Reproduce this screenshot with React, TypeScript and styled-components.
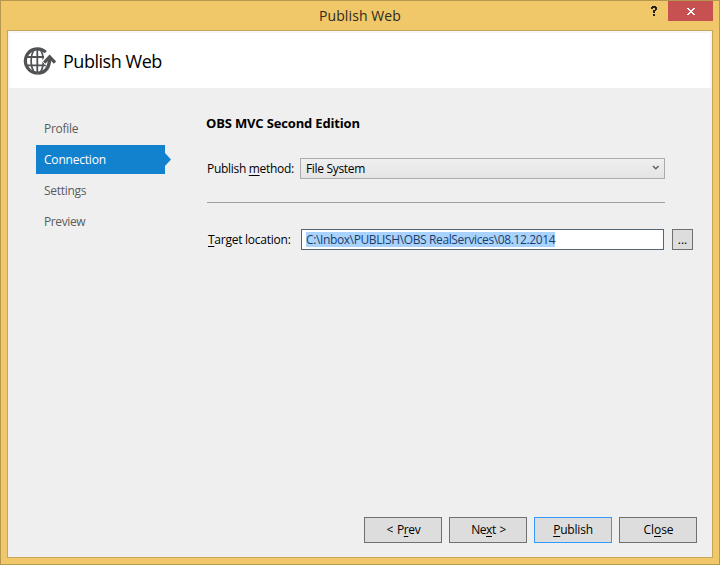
import React from "react";
import styled, { createGlobalStyle } from "styled-components";

const GlobalStyle = createGlobalStyle`
  * { box-sizing: border-box; }
  body { margin: 0; background: #f0c869; overflow: hidden; }
  button, input { font: inherit; }
`;

const Window = styled.div`
  width: 720px;
  height: 565px;
  display: flex;
  flex-direction: column;
  border: 1px solid #b7964e;
  background: #f0c869;
  color: #000;
  font: 12px/16px "Open Sans", "Noto Sans", sans-serif;
  white-space: nowrap;
`;

const TitleBar = styled.header`
  height: 29px;
  flex: none;
  display: grid;
  grid-template-columns: 1fr 86px 1fr;
  align-items: start;
`;

const Caption = styled.h1`
  grid-column: 2;
  margin: 5px 0 0 2px;
  font-size: 14px;
  line-height: 20px;
  font-weight: 400;
  letter-spacing: 0.1px;
  color: #2e2a20;
`;

const WindowControls = styled.div`
  display: flex;
  justify-content: flex-end;
  padding-right: 6px;
`;

const HelpButton = styled.button`
  width: 28px;
  height: 20px;
  padding: 0;
  border: 0;
  background: none;
  display: grid;
  place-items: center;
`;

const CloseBox = styled.button`
  width: 45px;
  height: 20px;
  padding: 0 0 0 1px;
  border: 0;
  background: #c75050;
  display: grid;
  place-items: center;
`;

const Dialog = styled.main`
  width: 706px;
  height: 528px;
  margin-left: 6px;
  display: flex;
  flex-direction: column;
  border: 1px solid #c8a657;
  background: #efefef;
`;

const Banner = styled.div`
  height: 55px;
  flex: none;
  margin: 2px 2px 0;
  padding-left: 13px;
  display: flex;
  align-items: center;
  background: #fff;
  box-shadow: 0 0 0 2px #f5f5f5;
  clip-path: inset(-2px -2px 0 -2px);
`;

const BannerTitle = styled.h2`
  margin: 1px 0 0 6px;
  font-size: 18px;
  line-height: 26px;
  font-weight: 400;
  letter-spacing: -0.47px;
`;

const Body = styled.div`
  flex: 1;
  display: grid;
  grid-template-columns: 135px 1fr;
  column-gap: 35px;
  padding: 26px 15px 0 28px;
`;

const Steps = styled.nav`
  display: flex;
  flex-direction: column;
  gap: 2px;
`;

const Step = styled.a<{ $active?: boolean; $tracking: number }>`
  height: 29px;
  padding-left: 8px;
  display: flex;
  align-items: center;
  color: ${(p) => (p.$active ? "#fff" : "#5c5c5c")};
  background: ${(p) => (p.$active ? "#1382ce" : "transparent")};
  letter-spacing: ${(p) => p.$tracking}px;
  clip-path: polygon(0 0, 129px 0, 129px 8px, 135px 14.5px, 129px 21px, 129px 100%, 0 100%);
`;

const Form = styled.section`
  display: flex;
  flex-direction: column;
`;

const ProjectName = styled.h3`
  margin: 0 0 26px;
  font-size: 13px;
  line-height: 18px;
  font-weight: 700;
  letter-spacing: -0.16px;
`;

const Field = styled.div`
  display: flex;
  align-items: center;
  height: 21px;
`;

const FieldLabel = styled.label<{ $width: number; $tracking: number; $inset: number }>`
  width: ${(p) => p.$width}px;
  padding-left: ${(p) => p.$inset}px;
  flex: none;
  letter-spacing: ${(p) => p.$tracking}px;
`;

const Key = styled.span`
  text-decoration: underline;
  text-decoration-thickness: 1px;
  text-underline-offset: 2px;
  text-decoration-skip-ink: none;
`;

const Select = styled.button`
  width: 365px;
  height: 21px;
  padding: 0 4px 0 5px;
  display: flex;
  align-items: center;
  justify-content: space-between;
  border: 1px solid #acacac;
  background: linear-gradient(#efefef, #e4e4e4);
  letter-spacing: -0.33px;
  color: #000;

  svg {
    margin-bottom: 2px;
  }
`;

const Divider = styled.hr`
  width: 458px;
  height: 1px;
  margin: 23px 0 26px 1px;
  border: 0;
  background: #a0a0a0;
`;

const PathBox = styled.div`
  width: 363px;
  height: 21px;
  padding: 2px 4px;
  border: 1px solid #566573;
  background: #fff;
`;

const Selected = styled.span`
  display: block;
  width: 249px;
  height: 15px;
  line-height: 15px;
  background: #a9d3fd;
  color: #1c3d68;
  letter-spacing: -0.38px;
`;

const Browse = styled.button`
  width: 21px;
  height: 21px;
  margin-left: 8px;
  padding: 0;
  border: 1px solid #707070;
  background: #ddd;
  color: #000;
  line-height: 19px;
`;

const Actions = styled.footer`
  display: flex;
  justify-content: flex-end;
  gap: 7px;
  padding: 0 15px 14px 0;
`;

const ActionButton = styled.button<{ $primary?: boolean; $tracking: number; $gap?: number }>`
  width: 78px;
  height: 26px;
  padding: 0 0 0 ${(p) => (p.$primary ? 0 : 1)}px;
  border: 1px solid ${(p) => (p.$primary ? "#3399ff" : "#707070")};
  background: #ddd;
  color: #000;
  letter-spacing: ${(p) => p.$tracking}px;
  word-spacing: ${(p) => p.$gap ?? 0}px;
`;

const GlobeIcon = () => (
  <svg width="34" height="30" viewBox="0 0 34 30" fill="none" stroke="#505254" aria-hidden="true">
    <path d="M22.8 6.2A12.1 12.1 0 1 0 14.3 27.1" strokeWidth="3.2" />
    <path d="M14.3 3v24M3 11h18M3 19.3h20" strokeWidth="1.8" />
    <path d="M11.6 3.3C7 9 7 21 11.6 26.5M17 3.3C21.4 9 21.4 21 17 26.5" strokeWidth="1.7" />
    <path d="M20.6 17L26.6 10.6" stroke="#fff" strokeWidth="6" />
    <path d="M14.3 27.1C22.5 27.1 26.6 21.5 26.6 11.5" strokeWidth="3.4" />
    <path d="M21.2 16.6L26.6 10.8L32 16.6" strokeWidth="3.2" />
  </svg>
);

const App = () => (
  <>
    <GlobalStyle />
    <Window>
      <TitleBar>
        <Caption>Publish Web</Caption>
        <WindowControls>
          <HelpButton aria-label="Help">
            <svg width="6" height="10" viewBox="0 0 6 10" fill="#24221e" shapeRendering="crispEdges">
              <path d="M1 0h4v1h1v3H5v1H4v2H2V4h2V2H2v1H0V1h1zM2 8h2v2H2z" />
            </svg>
          </HelpButton>
          <CloseBox aria-label="Close window">
            <svg width="8" height="7" viewBox="0 0 8 7" fill="#fff" shapeRendering="crispEdges">
              <path d="M0 0h2v1h1v1h2V1h1V0h2v1H7v1H6v1H5v1h1v1h1v1h1v1H6V6H5V5H3v1H2v1H0V6h1V5h1V4h1V3H2V2H1V1H0z" />
            </svg>
          </CloseBox>
        </WindowControls>
      </TitleBar>
      <Dialog>
        <Banner>
          <GlobeIcon />
          <BannerTitle>Publish Web</BannerTitle>
        </Banner>
        <Body>
          <Steps>
            <Step $tracking={-0.3}>Profile</Step>
            <Step $active $tracking={-0.2}>Connection</Step>
            <Step $tracking={-0.3}>Settings</Step>
            <Step $tracking={-0.4}>Preview</Step>
          </Steps>
          <Form>
            <ProjectName>OBS MVC Second Edition</ProjectName>
            <Field>
              <FieldLabel $width={94} $tracking={-0.3} $inset={1}>
                Publish <Key>m</Key>ethod:
              </FieldLabel>
              <Select>
                File System
                <svg width="8" height="6" viewBox="0 0 8 6" fill="none" stroke="#606060" strokeWidth="1.5">
                  <path d="M1 1l2.8 2.8L6.6 1" />
                </svg>
              </Select>
            </Field>
            <Divider />
            <Field>
              <FieldLabel $width={95} $tracking={-0.25} $inset={2}>
                <Key>T</Key>arget location:
              </FieldLabel>
              <PathBox>
                <Selected>C:\Inbox\PUBLISH\OBS RealServices\08.12.2014</Selected>
              </PathBox>
              <Browse>...</Browse>
            </Field>
          </Form>
        </Body>
        <Actions>
          <ActionButton $tracking={-0.35} $gap={1}>&lt; P<Key>r</Key>ev</ActionButton>
          <ActionButton $tracking={-0.45} $gap={1}>Ne<Key>x</Key>t &gt;</ActionButton>
          <ActionButton $primary $tracking={-0.2}><Key>P</Key>ublish</ActionButton>
          <ActionButton $tracking={-0.1}>Cl<Key>o</Key>se</ActionButton>
        </Actions>
      </Dialog>
    </Window>
  </>
);

export default App;
